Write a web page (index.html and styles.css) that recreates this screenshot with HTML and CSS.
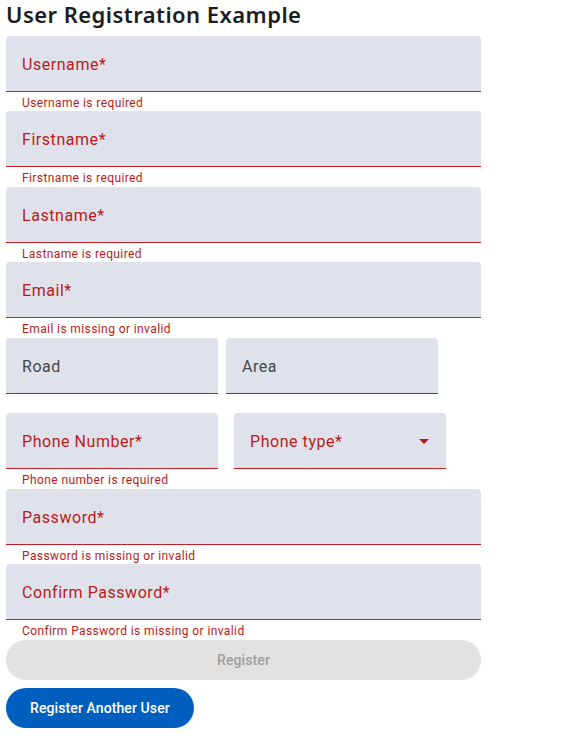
FILE: index.html
```html
<!DOCTYPE html>
<html>
<head>
<meta charset="utf-8">
<link rel="stylesheet" href="styles.css">
</head>
<body>
<h1 class="title">User Registration Example</h1>
<form class="form">
  <div class="field-block">
    <div class="field error"><span class="label">Username*</span></div>
    <div class="helper">Username is required</div>
  </div>
  <div class="field-block">
    <div class="field error"><span class="label">Firstname*</span></div>
    <div class="helper">Firstname is required</div>
  </div>
  <div class="field-block">
    <div class="field error"><span class="label">Lastname*</span></div>
    <div class="helper">Lastname is required</div>
  </div>
  <div class="field-block">
    <div class="field error"><span class="label">Email*</span></div>
    <div class="helper">Email is missing or invalid</div>
  </div>
  <div class="row row-address">
    <div class="field-block half">
      <div class="field"><span class="label">Road</span></div>
      <div class="helper"></div>
    </div>
    <div class="field-block half">
      <div class="field"><span class="label">Area</span></div>
      <div class="helper"></div>
    </div>
  </div>
  <div class="row row-phone">
    <div class="field-block half">
      <div class="field error"><span class="label">Phone Number*</span></div>
      <div class="helper">Phone number is required</div>
    </div>
    <div class="field-block half">
      <div class="field error select"><span class="label">Phone type*</span>
        <svg class="arrow" width="24" height="24" viewBox="0 0 24 24"><path d="M7 10l5 5 5-5z"/></svg>
      </div>
      <div class="helper"></div>
    </div>
  </div>
  <div class="field-block">
    <div class="field error"><span class="label">Password*</span></div>
    <div class="helper">Password is missing or invalid</div>
  </div>
  <div class="field-block">
    <div class="field error"><span class="label">Confirm Password*</span></div>
    <div class="helper">Confirm Password is missing or invalid</div>
  </div>
  <button type="button" class="btn btn-disabled">Register</button>
  <button type="button" class="btn btn-primary">Register Another User</button>
</form>
</body>
</html>
```

FILE: styles.css
```css
* { box-sizing: border-box; }
body {
  margin: 0;
  padding: 0 6px;
  background: #ffffff;
  font-family: Roboto, "Liberation Sans", sans-serif;
}
.title {
  margin: 0;
  height: 35.5px;
  padding-top: 1px;
  font-family: "Noto Sans", "Open Sans", sans-serif;
  font-weight: 600;
  font-size: 22px;
  line-height: 27px;
  color: #1c1d21;
  letter-spacing: 0.45px;
}
.form {
  width: 475px;
  display: flex;
  flex-direction: column;
}
.field-block {
  height: 75.5px;
  display: flex;
  flex-direction: column;
}
.field {
  position: relative;
  flex-shrink: 0;
  height: 56px;
  background: #dfe2eb;
  border-radius: 4px 4px 0 0;
  border-bottom: 1px solid #4a4a4f;
  display: flex;
  align-items: center;
  padding: 0 16px 0 16px;
}
.field.error {
  border-bottom: 1px solid #c42026;
}
.label {
  font-size: 16px;
  color: #44474e;
  letter-spacing: 0.55px;
  padding-top: 2px;
}
.field.error .label { color: #ba1a1a; }
.helper {
  font-size: 12px;
  line-height: 15px;
  margin-top: 4px;
  padding-left: 16px;
  color: #ba1a1a;
  letter-spacing: 0.4px;
}
.row {
  display: flex;
}
.row-address { gap: 8px; }
.row-phone { gap: 16px; }
.half { width: 212px; }
.arrow {
  position: absolute;
  right: 10px;
  top: 16px;
  fill: #ba1a1a;
}
.btn {
  border: none;
  height: 40px;
  border-radius: 20px;
  font-family: Roboto, "Liberation Sans", sans-serif;
  font-size: 14px;
  font-weight: 500;
  letter-spacing: 0.1px;
  padding: 0 24px;
}
.btn-disabled {
  width: 475px;
  background: #e2e2e2;
  color: #9e9e9e;
}
.btn-primary {
  margin-top: 8px;
  align-self: flex-start;
  background: #005fbe;
  color: #ffffff;
}
```
